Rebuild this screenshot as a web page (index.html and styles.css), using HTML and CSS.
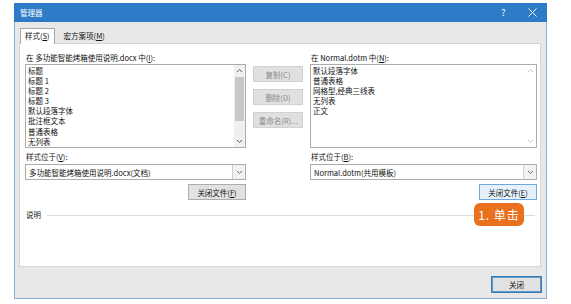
FILE: index.html
```html
<!DOCTYPE html>
<html lang="zh-CN">
<head>
    <meta charset="UTF-8">
    <title>管理器</title>
    <link rel="stylesheet" href="styles.css">
</head>
<body>
    <div class="dialog">
        <div class="titlebar">
            <span class="title">管理器</span>
            <span class="tb-btn help">?</span>
            <span class="tb-btn close">
                <svg width="9" height="9" viewBox="0 0 9 9"><path d="M0.5 0.5 L8.5 8.5 M8.5 0.5 L0.5 8.5" stroke="#fff" stroke-width="1"/></svg>
            </span>
        </div>
        <div class="dlg-body">
            <div class="tabs">
                <span class="tab active">样式(<u>S</u>)</span>
                <span class="tab">宏方案项(<u>M</u>)</span>
            </div>
            <div class="panel">
                <div class="columns">
                    <div class="col side">
                        <div class="label">在 多功能智能烤箱使用说明.docx 中(<u>I</u>):</div>
                        <div class="listbox">
                            <ul class="items">
                                <li>标题</li>
                                <li>标题 1</li>
                                <li>标题 2</li>
                                <li>标题 3</li>
                                <li>默认段落字体</li>
                                <li>批注框文本</li>
                                <li>普通表格</li>
                                <li>无列表</li>
                            </ul>
                            <div class="vscroll">
                                <span class="arrow"><svg width="7" height="5" viewBox="0 0 7 5"><polyline points="1,4 3.5,1.5 6,4" fill="none" stroke="#606060"/></svg></span>
                                <div class="track"><div class="thumb"></div></div>
                                <span class="arrow"><svg width="7" height="5" viewBox="0 0 7 5"><polyline points="1,1 3.5,3.5 6,1" fill="none" stroke="#606060"/></svg></span>
                            </div>
                        </div>
                        <div class="label tall">样式位于(<u>V</u>):</div>
                        <div class="combo">
                            <span class="combo-text">多功能智能烤箱使用说明.docx(文档)</span>
                            <span class="combo-btn"><svg width="7" height="5" viewBox="0 0 7 5"><polyline points="1,1 3.5,3.5 6,1" fill="none" stroke="#707070"/></svg></span>
                        </div>
                        <div class="btn-row">
                            <button class="btn file-btn">关闭文件(<u>F</u>)</button>
                        </div>
                    </div>

                    <div class="col mid">
                        <button class="btn action" disabled>复制(C)</button>
                        <button class="btn action" disabled>删除(D)</button>
                        <button class="btn action" disabled>重命名(R)...</button>
                    </div>

                    <div class="col side wide">
                        <div class="label">在 Normal.dotm 中(<u>N</u>):</div>
                        <div class="listbox">
                            <ul class="items">
                                <li>默认段落字体</li>
                                <li>普通表格</li>
                                <li>网格型,经典三线表</li>
                                <li>无列表</li>
                                <li>正文</li>
                            </ul>
                            <div class="vscroll off">
                                <span class="arrow"><svg width="7" height="5" viewBox="0 0 7 5"><polyline points="1,4 3.5,1.5 6,4" fill="none" stroke="#c4c4c4"/></svg></span>
                                <div class="track"></div>
                                <span class="arrow"><svg width="7" height="5" viewBox="0 0 7 5"><polyline points="1,1 3.5,3.5 6,1" fill="none" stroke="#c4c4c4"/></svg></span>
                            </div>
                        </div>
                        <div class="label tall">样式位于(<u>B</u>):</div>
                        <div class="combo">
                            <span class="combo-text">Normal.dotm(共用模板)</span>
                            <span class="combo-btn"><svg width="7" height="5" viewBox="0 0 7 5"><polyline points="1,1 3.5,3.5 6,1" fill="none" stroke="#707070"/></svg></span>
                        </div>
                        <div class="btn-row">
                            <button class="btn file-btn hot">关闭文件(<u>E</u>)</button>
                        </div>
                    </div>
                </div>

                <div class="desc">
                    <span>说明</span>
                    <span class="rule"></span>
                </div>

                <div class="callout">1. 单击</div>
            </div>
            <div class="footer">
                <button class="btn close-btn">关闭</button>
            </div>
        </div>
    </div>
</body>
</html>
```

FILE: styles.css
```css
body {
    margin: 0;
    background-color: #fff;
    font-family: "Noto Sans CJK SC", sans-serif;
    font-size: 7.5px;
    color: #111;
}
u {
    text-decoration: underline;
    text-underline-offset: 1px;
}
.dialog {
    margin: 3px 0 0 14px;
    width: 533px;
    height: 296px;
    box-sizing: border-box;
    border: 1px solid #86b0da;
    border-top: none;
    background-color: #e8e8e8;
}
.titlebar {
    height: 19px;
    margin: 0 -1px;
    background-color: #2d7bc6;
    color: #fff;
    display: flex;
    align-items: center;
    padding-left: 6px;
}
.title {
    flex: 1;
    font-size: 7.5px;
}
.tb-btn {
    width: 29px;
    text-align: center;
    font-size: 9px;
    display: flex;
    justify-content: center;
}
.dlg-body {
    padding: 6px 5px 0 4px;
}
.tabs {
    display: flex;
    height: 15px;
    margin-left: 1px;
}
.tab {
    padding: 0 6px;
    line-height: 15px;
    margin-left: 3px;
}
.tab.active {
    margin-left: 0;
    padding: 0 4px;
    background-color: #fff;
    border: 1px solid #a8a8a8;
    border-bottom: none;
    line-height: 14px;
    margin-bottom: -1px;
    position: relative;
    z-index: 1;
}
.panel {
    position: relative;
    height: 224px;
    box-sizing: border-box;
    background-color: #fff;
    border: 1px solid #d6d6d6;
    padding: 8px 3px 0 5px;
}
.columns {
    display: flex;
}
.col {
    display: flex;
    flex-direction: column;
}
.side {
    width: 221px;
}
.side.wide {
    width: 227px;
}
.mid {
    width: 50px;
    margin: 0 7px 0 7px;
    padding-top: 14px;
    gap: 7px;
}
.label {
    line-height: 12px;
    height: 12px;
    white-space: nowrap;
    padding-left: 1px;
}
.label.tall {
    line-height: 17px;
    height: 16px;
}
.listbox {
    height: 84px;
    box-sizing: border-box;
    border: 1px solid #acacac;
    display: flex;
}
.items {
    list-style: none;
    margin: 0;
    padding: 1px 0 0 2px;
    flex: 1;
    line-height: 10.1px;
}
.vscroll {
    width: 11px;
    display: flex;
    flex-direction: column;
    background-color: #f0f0f0;
}
.vscroll.off {
    background-color: #fff;
}
.arrow {
    height: 11px;
    display: flex;
    align-items: center;
    justify-content: center;
}
.track {
    flex: 1;
}
.thumb {
    height: 44px;
    margin: 1px 1px 0 1px;
    background-color: #c8c8c8;
}
.combo {
    height: 16px;
    box-sizing: border-box;
    border: 1px solid #acacac;
    display: flex;
    align-items: center;
}
.combo-text {
    flex: 1;
    padding-left: 3px;
}
.combo-btn {
    width: 12px;
    height: 14px;
    border-left: 1px solid #d0d0d0;
    background-color: #f2f2f2;
    display: flex;
    align-items: center;
    justify-content: center;
}
.btn-row {
    display: flex;
    justify-content: flex-end;
    margin-top: 4px;
}
.btn {
    font: inherit;
    color: #111;
    margin: 0;
    padding: 0;
    background-color: #e1e1e1;
    border: 1px solid #adadad;
    height: 16px;
    cursor: pointer;
}
.file-btn {
    width: 58px;
}
.file-btn.hot {
    background-color: #e5f1fb;
    border-color: #6fa8dc;
}
.btn.action {
    width: 50px;
    background-color: #e0e0e0;
    border-color: #d0d0d0;
    color: #8a8a8a;
    cursor: default;
}
.desc {
    display: flex;
    align-items: center;
    margin-top: 9px;
    line-height: 12px;
    padding-left: 1px;
}
.rule {
    flex: 1;
    height: 1px;
    margin-left: 6px;
    margin-right: 2px;
    background-color: #dcdcdc;
}
.callout {
    position: absolute;
    left: 454px;
    top: 159px;
    width: 50px;
    height: 23px;
    box-sizing: border-box;
    border-radius: 6px;
    background-color: #e9701d;
    color: #fff;
    font-size: 12px;
    line-height: 23px;
    text-align: center;
    letter-spacing: 1px;
}
.footer {
    display: flex;
    justify-content: flex-end;
    padding-top: 9px;
    margin-right: -1px;
}
.close-btn {
    width: 51px;
    height: 17px;
    border: 1px solid #3a7bb6;
    box-shadow: inset 0 0 0 1px #5d97cc;
}
```
